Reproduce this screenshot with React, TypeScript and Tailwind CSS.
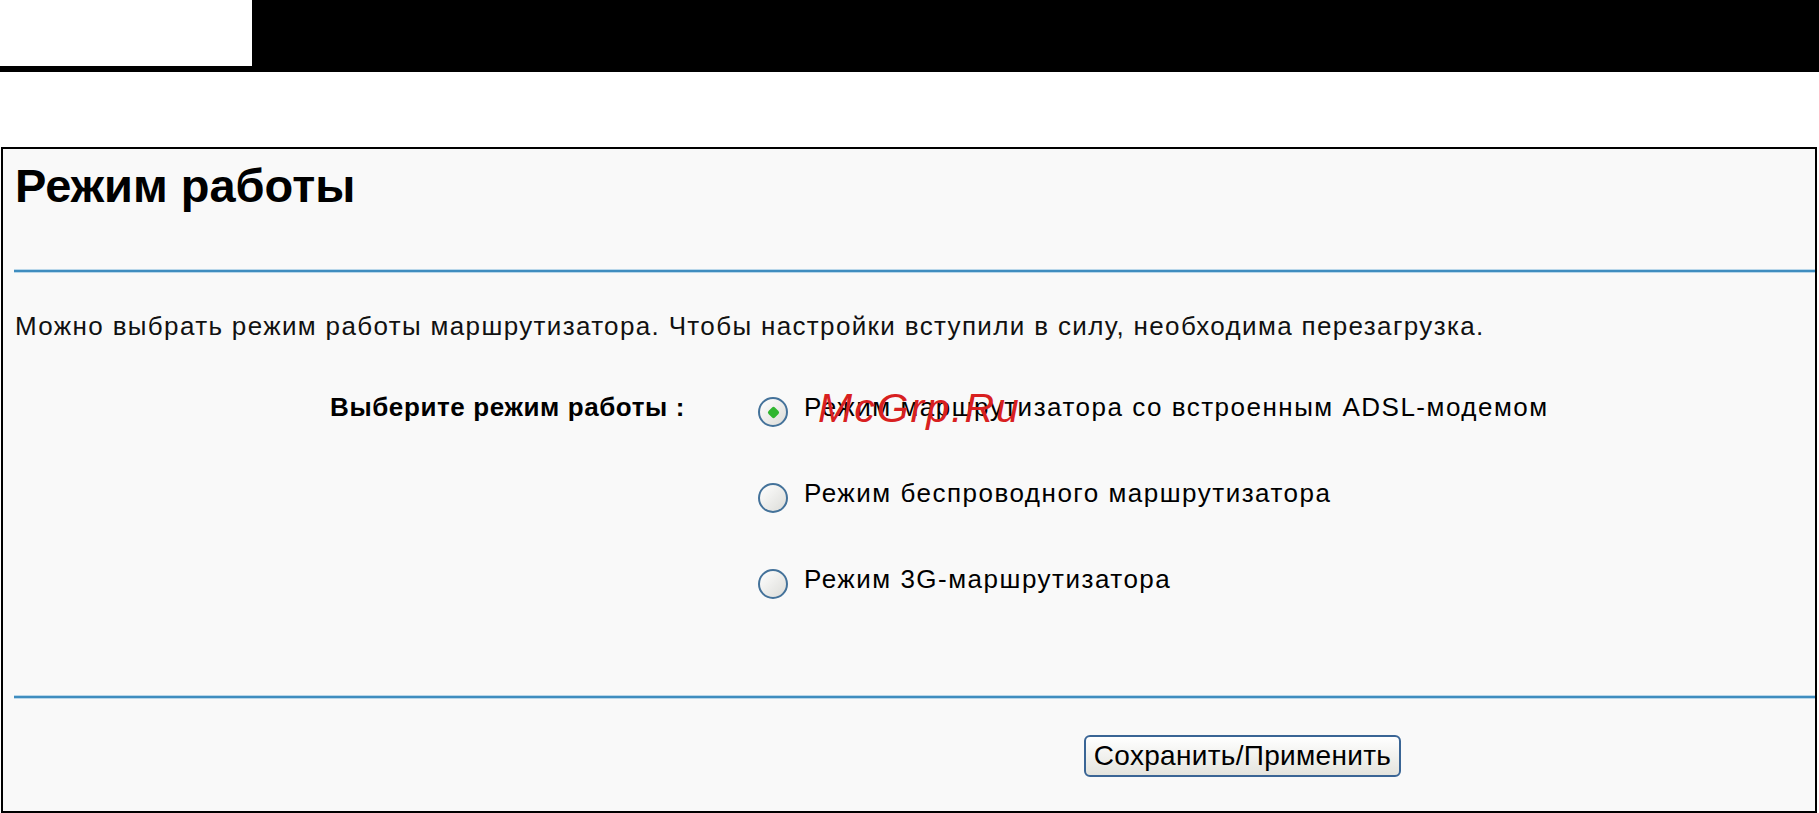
const font = "font-['Liberation_Sans',Arial,sans-serif]";

function Radio({ checked }: { checked?: boolean }) {
  return (
    <span className="mt-[5px] flex h-[30px] w-[30px] shrink-0 items-center justify-center rounded-full border-2 border-[#44729a] bg-gradient-to-br from-white to-[#dcdcd8]">
      {checked && <span className="h-[9px] w-[9px] rotate-45 rounded-[2px] bg-[#2fb52f]" />}
    </span>
  );
}

function Divider() {
  return <div className="ml-[11px] h-[2px] bg-[#3f8dbf] shadow-[0_1px_0_#b9d7ea,0_-1px_0_#b9d7ea]" />;
}

const modes = [
  'Режим маршрутизатора со встроенным ADSL-модемом',
  'Режим беспроводного маршрутизатора',
  'Режим 3G-маршрутизатора',
];

export default function App() {
  return (
    <div className={`relative h-[813px] w-[1819px] overflow-hidden bg-white text-black ${font}`}>
      {/* верхняя полоса */}
      <div className="flex h-[72px] bg-black">
        <div className="h-[66px] w-[252px] bg-white" />
      </div>

      <div className="ml-[1px] mt-[75px] h-[666px] w-[1816px] border-2 border-black bg-[#f9f9f9]">
        <h1 className="ml-[12px] mt-[11px] text-[47px] font-bold leading-[52px]">Режим работы</h1>

        <div className="mt-[58px]">
          <Divider />
        </div>

        <p className="ml-[12px] mt-[39px] text-[26px] leading-[30px] tracking-[1.35px] text-[#111]">
          Можно выбрать режим работы маршрутизатора. Чтобы настройки вступили в силу, необходима перезагрузка.
        </p>

        <div className="mt-[51px] flex">
          <div className="w-[755px] pl-[327px] text-[26px] font-bold leading-[30px] tracking-[0.6px]">
            Выберите режим работы :
          </div>
          <div className="flex flex-col gap-[56px]">
            {modes.map((m, i) => (
              <label key={m} className="flex h-[30px] items-start gap-[16px]">
                <Radio checked={i === 0} />
                <span className="text-[26px] leading-[30px] tracking-[1.5px]">{m}</span>
              </label>
            ))}
          </div>
        </div>

        <div className="mt-[102px]">
          <Divider />
        </div>

        <div className="mt-[37px] pl-[1081px]">
          <button className="flex h-[42px] w-[317px] items-center justify-center rounded-[6px] border-2 border-[#3a6595] bg-gradient-to-b from-white to-[#e4e4de] text-[28px] leading-none tracking-[0.3px] text-black">
            Сохранить/Применить
          </button>
        </div>
      </div>

      {/* водяной знак */}
      <div className="absolute left-[818px] top-[388px] text-[41px] italic leading-[40px] tracking-[2px] text-[#d82020]">
        McGrp.Ru
      </div>
    </div>
  );
}
